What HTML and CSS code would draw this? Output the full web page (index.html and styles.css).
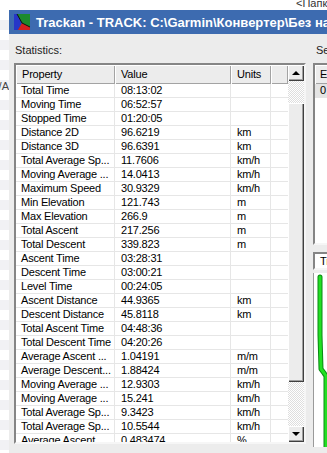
FILE: index.html
```html
<!DOCTYPE html>
<html lang="ru">
<head>
  <meta charset="UTF-8" />
  <title>Trackan - TRACK</title>
  <link rel="stylesheet" href="styles.css">
</head>
<body>
  <div class="top-strip">&lt;Папка&gt;</div>

  <div class="desk">
    <div class="left-strip"><span>/A</span></div>

    <div class="window">
      <div class="titlebar">
        <svg class="app-icon" width="16" height="16" viewBox="0 0 16 16">
          <rect width="16" height="16" fill="#1c8a2c"/>
          <polygon points="0,0 3,0 8,9 4,16 0,16" fill="#2636c8"/>
          <polygon points="4,16 8,9 16,13 16,16" fill="#d42020"/>
          <polyline points="3,0 8,9 16,13" fill="none" stroke="#111" stroke-width="1"/>
        </svg>
        <span class="title">Trackan - TRACK: C:\Garmin\Конвертер\Без названия</span>
      </div>

      <div class="client">
        <!-- Statistics list -->
        <div class="stats-pane">
          <div class="group-label">Statistics:</div>
          <div class="listview">
            <div class="list-main">
              <div class="list-head">
                <div class="hcell">Property</div>
                <div class="hcell">Value</div>
                <div class="hcell">Units</div>
                <div class="hcell"></div>
              </div>
              <div class="list-body">
                <div class="row"><span>Total Time</span><span>08:13:02</span><span></span><span></span></div>
                <div class="row"><span>Moving Time</span><span>06:52:57</span><span></span><span></span></div>
                <div class="row"><span>Stopped Time</span><span>01:20:05</span><span></span><span></span></div>
                <div class="row"><span>Distance 2D</span><span>96.6219</span><span>km</span><span></span></div>
                <div class="row"><span>Distance 3D</span><span>96.6391</span><span>km</span><span></span></div>
                <div class="row"><span>Total Average Sp...</span><span>11.7606</span><span>km/h</span><span></span></div>
                <div class="row"><span>Moving Average ...</span><span>14.0413</span><span>km/h</span><span></span></div>
                <div class="row"><span>Maximum Speed</span><span>30.9329</span><span>km/h</span><span></span></div>
                <div class="row"><span>Min Elevation</span><span>121.743</span><span>m</span><span></span></div>
                <div class="row"><span>Max Elevation</span><span>266.9</span><span>m</span><span></span></div>
                <div class="row"><span>Total Ascent</span><span>217.256</span><span>m</span><span></span></div>
                <div class="row"><span>Total Descent</span><span>339.823</span><span>m</span><span></span></div>
                <div class="row"><span>Ascent Time</span><span>03:28:31</span><span></span><span></span></div>
                <div class="row"><span>Descent Time</span><span>03:00:21</span><span></span><span></span></div>
                <div class="row"><span>Level Time</span><span>00:24:05</span><span></span><span></span></div>
                <div class="row"><span>Ascent Distance</span><span>44.9365</span><span>km</span><span></span></div>
                <div class="row"><span>Descent Distance</span><span>45.8118</span><span>km</span><span></span></div>
                <div class="row"><span>Total Ascent Time</span><span>04:48:36</span><span></span><span></span></div>
                <div class="row"><span>Total Descent Time</span><span>04:20:26</span><span></span><span></span></div>
                <div class="row"><span>Average Ascent ...</span><span>1.04191</span><span>m/m</span><span></span></div>
                <div class="row"><span>Average Descent...</span><span>1.88424</span><span>m/m</span><span></span></div>
                <div class="row"><span>Moving Average ...</span><span>12.9303</span><span>km/h</span><span></span></div>
                <div class="row"><span>Moving Average ...</span><span>15.241</span><span>km/h</span><span></span></div>
                <div class="row"><span>Total Average Sp...</span><span>9.3423</span><span>km/h</span><span></span></div>
                <div class="row"><span>Total Average Sp...</span><span>10.5544</span><span>km/h</span><span></span></div>
                <div class="row"><span>Average Ascent ...</span><span>0.483474</span><span>%</span><span></span></div>
              </div>
            </div>

            <div class="vscroll">
              <div class="sb-btn"><i class="arrow-up"></i></div>
              <div class="sb-track sb-track-top"></div>
              <div class="sb-thumb"></div>
              <div class="sb-track sb-track-bottom"></div>
              <div class="sb-btn"><i class="arrow-down"></i></div>
            </div>
          </div>
        </div>

        <!-- Segments side -->
        <div class="side-pane">
          <div class="group-label side-label">Segments:</div>
          <div class="seg-list">
            <div class="seg-head">End</div>
            <div class="seg-row">0</div>
          </div>
          <div class="combo">Track</div>
          <div class="chart">
            <svg width="30" height="174" viewBox="0 0 30 174">
              <polyline points="6,4 6,62 7,96 10,100 12,103 12,174" fill="none" stroke="#0a8a14" stroke-width="5" stroke-linecap="round" stroke-linejoin="round"/>
              <polyline points="6,4 6,62 7,96 10,100 12,103 12,174" fill="none" stroke="#22e022" stroke-width="3" stroke-linecap="round" stroke-linejoin="round"/>
            </svg>
          </div>
        </div>
      </div>
    </div>
  </div>
</body>
</html>
```

FILE: styles.css
```css
/* Base Reset */
* {
  margin: 0;
  padding: 0;
  box-sizing: border-box;
}

body {
  width: 327px;
  height: 453px;
  overflow: hidden;
  background: #fff;
  font-family: "Liberation Sans", Arial, sans-serif;
  font-size: 11px;
  color: #000;
}

/* Stuff from the window behind */
.top-strip {
  height: 10px;
  overflow: hidden;
  padding-left: 296px;
  line-height: 6px;
  white-space: nowrap;
  color: #333;
}

.desk {
  display: flex;
  height: 443px;
}

.left-strip {
  width: 9px;
  flex: none;
  overflow: hidden;
  display: flex;
  justify-content: flex-end;
  align-items: flex-start;
  padding-top: 70px;
  color: #444;
  background: repeating-linear-gradient(#fff 0 10px, #f1f1f4 10px 20px);
}

/* Window */
.window {
  width: 330px;
  flex: none;
  display: flex;
  flex-direction: column;
}

.titlebar {
  height: 24px;
  flex: none;
  background: #3d6bb0;
  display: flex;
  align-items: center;
  gap: 6px;
  padding-left: 5px;
  overflow: hidden;
  white-space: nowrap;
  color: #fff;
  font-weight: bold;
  font-size: 13px;
}

.app-icon {
  flex: none;
}

.client {
  flex: 1;
  display: flex;
  padding: 9px 0 0 5px;
  background: #ececec;
}

.group-label {
  height: 14px;
  line-height: 14px;
  margin-bottom: 6px;
  padding-left: 1px;
  color: #222;
}

/* Stats list */
.stats-pane {
  width: 292px;
  flex: none;
}

.listview {
  height: 381px;
  display: flex;
  border: 2px solid;
  border-color: #858585 #f6f6f6 #f6f6f6 #858585;
}

.list-main {
  width: 272px;
  flex: none;
  display: flex;
  flex-direction: column;
  background: #fff;
}

.list-head {
  display: grid;
  grid-template-columns: 99px 116px 40px 17px;
  height: 19px;
  flex: none;
}

.hcell {
  background: #ececec;
  line-height: 18px;
  padding-left: 6px;
  box-shadow: inset 1px 1px #fff, inset -1px -1px #a3a3a3;
  letter-spacing: -0.2px;
}

.list-body {
  flex: 1;
  overflow: hidden;
}

.row {
  display: grid;
  grid-template-columns: 99px 116px 40px 17px;
  height: 14px;
  line-height: 13px;
  border-bottom: 1px solid #e6e6e6;
  letter-spacing: -0.2px;
  white-space: nowrap;
}

.row span {
  border-right: 1px solid #e6e6e6;
  padding-left: 6px;
  overflow: hidden;
}

.row span:first-child {
  padding-left: 5px;
}

.row span:last-child {
  border-right: none;
}

/* Scrollbar */
.vscroll {
  width: 16px;
  flex: none;
  display: flex;
  flex-direction: column;
}

.sb-btn,
.sb-thumb {
  background: #ececec;
  box-shadow: inset 1px 1px #fff, inset -1px -1px #404040, inset -2px -2px #a0a0a0;
}

.sb-btn {
  height: 16px;
  flex: none;
  display: flex;
  align-items: center;
  justify-content: center;
}

.sb-track {
  background: repeating-conic-gradient(#fff 0 25%, #dedede 0 50%) 0 0 / 2px 2px;
}

.sb-track-top {
  height: 22px;
}

.sb-thumb {
  height: 279px;
}

.sb-track-bottom {
  flex: 1;
}

.arrow-up,
.arrow-down {
  width: 0;
  height: 0;
  border-left: 4px solid transparent;
  border-right: 4px solid transparent;
}

.arrow-up {
  border-bottom: 4px solid #000;
}

.arrow-down {
  border-top: 4px solid #000;
}

/* Side pane */
.side-pane {
  width: 30px;
  flex: none;
  margin-left: 7px;
  display: flex;
  flex-direction: column;
}

.side-label {
  padding-left: 3px;
  white-space: nowrap;
}

.seg-list {
  height: 182px;
  background: #fff;
  border: 2px solid;
  border-color: #858585 #f6f6f6 #f6f6f6 #858585;
  white-space: nowrap;
}

.seg-head {
  height: 19px;
  line-height: 18px;
  padding-left: 5px;
  background: #ececec;
  box-shadow: inset 1px 1px #fff, inset -1px -1px #a3a3a3;
}

.seg-row {
  height: 14px;
  line-height: 13px;
  padding-left: 5px;
  background: #e4e4e4;
}

.combo {
  height: 18px;
  margin-top: 7px;
  line-height: 14px;
  padding-left: 5px;
  background: #fff;
  border: 2px solid;
  border-color: #858585 #f6f6f6 #f6f6f6 #858585;
  white-space: nowrap;
}

.chart {
  height: 174px;
  margin-top: 3px;
  background: #fff;
  border-left: 1px solid #9a9a9a;
  overflow: hidden;
}

.chart svg {
  display: block;
}
```
